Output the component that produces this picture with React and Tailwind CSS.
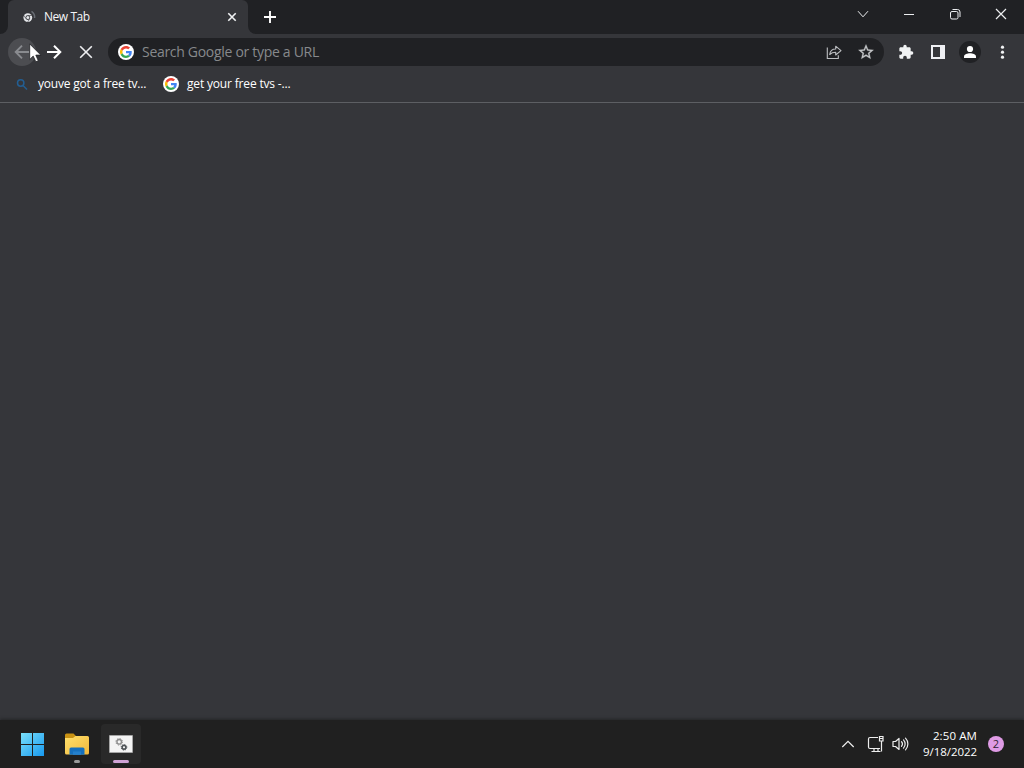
import React from 'react';

const BOOKMARKS = [
  { title: 'youve got a free tv...', icon: 'search', width: 'w-[108px]', tracking: 'tracking-[-0.2px]' },
  { title: 'get your free tvs -...', icon: 'google', width: 'w-[104px]', tracking: 'tracking-[-0.17px]' },
];

function GoogleIcon() {
  return (
    <span className="flex h-4 w-4 shrink-0 items-center justify-center rounded-full bg-white">
      <svg viewBox="0 0 48 48" className="h-3 w-3">
        <path fill="#EA4335" d="M24 9.5c3.5 0 6.700 1.200 9.200 3.600l6.900-6.900C35.900 2.400 30.500 0 24 0 14.600 0 6.500 5.400 2.600 13.200l8 6.200C12.400 13.700 17.700 9.500 24 9.500z" />
        <path fill="#4285F4" d="M47 24.500c0-1.600-.2-3.100-.4-4.500H24v9h12.900c-.6 3-2.300 5.500-4.800 7.200l7.700 6C44.400 38 47 31.800 47 24.500z" />
        <path fill="#FBBC05" d="M10.500 28.600A14.500 14.500 0 0 1 10.600 19.400l-8-6.200A24 24 0 0 0 2.600 34.800z" />
        <path fill="#34A853" d="M24 48c6.500 0 11.900-2.100 15.900-5.800l-7.700-6c-2.200 1.500-4.900 2.300-8.200 2.300-6.300 0-11.600-4.200-13.500-9.900l-7.900 6.200C6.500 42.600 14.600 48 24 48z" />
      </svg>
    </span>
  );
}

function TabFavicon() {
  return (
    <svg viewBox="0 0 16 16" className="h-4 w-4" fill="none">
      <circle cx="7.800" cy="8.600" r="4.400" fill="#e4e6e9" />
      <circle cx="7.800" cy="8.600" r="2.300" fill="#35363a" />
      <circle cx="7.800" cy="8.600" r="1.500" fill="#e4e6e9" />
      <path d="M7.800 6.500h4M5.900 9.700 4 6.500M9.700 9.700 7.700 13" stroke="#35363a" strokeWidth=".6" />
      <path d="M11.500 2.300A7 7 0 0 1 14.600 9" stroke="#696d74" strokeWidth="1.500" />
    </svg>
  );
}

function TabStrip() {
  return (
    <div className="flex h-[34px] shrink-0 bg-[#35363a]">
      <div className="w-2 rounded-br-lg bg-[#202124]" />
      <div className="w-60 bg-[#202124]">
        <div className="flex h-full items-center rounded-t-[6px] bg-[#35363a] pr-2 pl-3">
          <TabFavicon />
          <span className="ml-2 flex-1 text-xs leading-4 tracking-[-0.45px] whitespace-nowrap text-[#f4f5f7]">New Tab</span>
          <svg viewBox="0 0 16 16" className="h-4 w-4" stroke="#f1f3f4" strokeWidth="1.600">
            <path d="m4.300 4.300 7.400 7.400M11.700 4.300l-7.400 7.400" />
          </svg>
        </div>
      </div>
      <div className="flex flex-1 rounded-bl-lg bg-[#202124]">
        <div className="flex w-11 items-center justify-center">
          <svg viewBox="0 0 14 14" className="h-3.5 w-3.5" stroke="#fff" strokeWidth="1.900">
            <path d="M7 1v12M1 7h12" />
          </svg>
        </div>
        <div className="ml-auto flex h-7 items-center">
          <WindowButton><path d="m3 5.200 5 5.600 5-5.600" /></WindowButton>
          <WindowButton><path d="M3 8.500h10" /></WindowButton>
          <WindowButton>
            <rect x="3.500" y="5.500" width="7.500" height="7.500" rx="1.500" />
            <path d="M5.500 3.500h5a2.500 2.500 0 0 1 2.500 2.500v5" />
          </WindowButton>
          <WindowButton><path d="m3 3 10 10M13 3 3 13" strokeWidth="1.200" /></WindowButton>
        </div>
      </div>
    </div>
  );
}

function WindowButton({ children }) {
  return (
    <button className="flex h-7 w-[46px] items-center justify-center">
      <svg viewBox="0 0 16 16" className="h-4 w-4" fill="none" stroke="#eceef0" strokeWidth="1">{children}</svg>
    </button>
  );
}

function ToolButton({ children, className = '' }) {
  return (
    <button className={`flex h-7 w-7 shrink-0 items-center justify-center rounded-full ${className}`}>
      {children}
    </button>
  );
}

function Toolbar() {
  return (
    <div className="flex h-9 shrink-0 items-center gap-1 px-2">
      <ToolButton className="relative bg-[#4c4d51]">
        <svg viewBox="0 0 16 16" className="h-4 w-4" fill="none" stroke="#898b8f" strokeWidth="1.900">
          <path d="M15 8H2M8 1.700 1.700 8 8 14.300" />
        </svg>
        {/* Mouse pointer */}
        <svg viewBox="0 0 13 20" className="absolute top-[5px] left-[21px] h-5 w-[13px]" fill="#fff" stroke="#202124" strokeWidth=".8">
          <path d="M.7.900v15.600l3.500-3.400 2.600 5.700 2.500-1.100-2.500-5.600h5z" />
        </svg>
      </ToolButton>
      <ToolButton>
        <svg viewBox="0 0 16 16" className="h-4 w-4" fill="none" stroke="#fff" strokeWidth="2">
          <path d="M1 8h13M8 1.700 14.300 8 8 14.300" />
        </svg>
      </ToolButton>
      <ToolButton>
        <svg viewBox="0 0 16 16" className="h-4 w-4" stroke="#eff0f2" strokeWidth="1.600">
          <path d="m2.200 2.200 11.600 11.600M13.800 2.200 2.200 13.800" />
        </svg>
      </ToolButton>

      {/* Omnibox */}
      <div className="mx-1 flex h-7 flex-1 items-center rounded-full bg-[#202124] pr-1 pl-2.5">
        <GoogleIcon />
        <span className="ml-2 flex-1 text-[14px] leading-5 tracking-[-0.3px] whitespace-nowrap text-[#87898c]">Search Google or type a URL</span>
        <ToolButton className="mr-1">
          <svg viewBox="0 0 16 16" className="h-4 w-4" fill="none" stroke="#bcbec1" strokeWidth="1.100">
            <path d="M1.300 3.500v11h11v-3.200" />
            <path d="M3.700 10.500c.5-3.700 2.500-5.500 6-5.500V2.200L15 6.600 9.700 11V8.300c-2.500 0-4.400.600-6 2.200z" strokeLinejoin="round" />
          </svg>
        </ToolButton>
        <ToolButton>
          <svg viewBox="0 0 24 24" className="h-[18px] w-[18px]" fill="#c5c7ca" stroke="#c5c7ca" strokeWidth=".4">
            <path d="m22 9.240-7.190-.62L12 2 9.190 8.630 2 9.240l5.460 4.730L5.820 21 12 17.270 18.180 21l-1.630-7.030L22 9.240zM12 15.400l-3.760 2.270 1-4.280-3.320-2.880 4.380-.38L12 6.100l1.710 4.040 4.380.38-3.320 2.880 1 4.280L12 15.400z" />
          </svg>
        </ToolButton>
      </div>

      <ToolButton>
        <svg viewBox="0 0 24 24" className="h-4 w-4" fill="#f1f3f4">
          <path d="M20.500 11H19V7c0-1.100-.9-2-2-2h-4V3.500a2.500 2.500 0 0 0-5 0V5H4c-1.100 0-1.990.9-1.990 2v3.800H3.500c1.490 0 2.700 1.210 2.700 2.700s-1.210 2.700-2.700 2.700H2V20c0 1.100.9 2 2 2h3.800v-1.500c0-1.490 1.210-2.700 2.700-2.700s2.700 1.210 2.700 2.700V22H17c1.100 0 2-.9 2-2v-4h1.500a2.500 2.500 0 0 0 0-5z" />
        </svg>
      </ToolButton>
      <ToolButton>
        <svg viewBox="0 0 16 16" className="h-4 w-4">
          <path fill="#eff0f4" fillRule="evenodd" d="M1 1h14v14H1zM3 3v10h7V3z" />
        </svg>
      </ToolButton>
      <ToolButton>
        <span className="flex h-[22px] w-[22px] items-center justify-center rounded-full bg-[#202124]">
          <svg viewBox="0 0 16 16" className="h-4 w-4" fill="#fff">
            <circle cx="8" cy="5" r="3.100" />
            <path d="M2 14v-1.500C2 10.200 5.500 9.200 8 9.200s6 1 6 3.300V14z" />
          </svg>
        </span>
      </ToolButton>
      <ToolButton>
        <svg viewBox="0 0 16 16" className="h-4 w-4" fill="#f1f3f4">
          <circle cx="8.500" cy="3.200" r="1.600" />
          <circle cx="8.500" cy="8.200" r="1.600" />
          <circle cx="8.500" cy="13.200" r="1.600" />
        </svg>
      </ToolButton>
    </div>
  );
}

function BookmarksBar() {
  return (
    <div className="flex h-[33px] shrink-0 items-start gap-[17px] border-b border-[#5d5f63] px-3.5 pt-1.5">
      {BOOKMARKS.map((b) => (
        <div key={b.title} className="flex items-center gap-2">
          {b.icon === 'google' ? <GoogleIcon /> : (
            <svg viewBox="0 0 16 16" className="h-4 w-4" fill="none" stroke="#235e92" strokeWidth="1.500">
              <circle cx="6.700" cy="7" r="3.200" />
              <path d="m9 9.500 4 4" />
            </svg>
          )}
          <span className={`${b.width} ${b.tracking} text-xs leading-4 whitespace-nowrap text-white`}>{b.title}</span>
        </div>
      ))}
    </div>
  );
}

function StartIcon() {
  return (
    <svg viewBox="0 0 24 24" className="h-6 w-6">
      <defs>
        <linearGradient id="win" x1="0" y1="0" x2="24" y2="24" gradientUnits="userSpaceOnUse">
          <stop stopColor="#7ce2fb" />
          <stop offset="1" stopColor="#1597ef" />
        </linearGradient>
      </defs>
      <path fill="url(#win)" d="M0 1h11v11H0zM12 1h11v11H12zM0 13h11v11H0zM12 13h11v11H12z" />
    </svg>
  );
}

function FolderIcon() {
  return (
    <svg viewBox="0 0 26 24" className="h-6 w-[26px]">
      <defs>
        <linearGradient id="folder" x1="0" y1="0" x2="1" y2="1">
          <stop stopColor="#ffe06c" />
          <stop offset="1" stopColor="#f2b83b" />
        </linearGradient>
      </defs>
      <path fill="#c99213" d="M1 3a1.500 1.500 0 0 1 1.500-1.500h7L12 4v4H1z" />
      <path fill="url(#folder)" d="M1 6h8l2.500-2H23.500A1.500 1.500 0 0 1 25 5.500V21a1.500 1.500 0 0 1-1.500 1.500h-21A1.500 1.500 0 0 1 1 21z" />
      <path fill="#1670bd" d="M5.500 22.800V17a1.500 1.500 0 0 1 1.500-1.500h12a1.500 1.500 0 0 1 1.500 1.500v5.800z" />
      <path fill="#2480cc" d="M9 19.500h8v3.300H9z" />
    </svg>
  );
}

function ScriptWindowIcon() {
  return (
    <svg viewBox="0 0 24 18" className="h-[18px] w-6" fill="none">
      <path fill="#f4f4f4" stroke="#b5b5b5" strokeWidth=".6" d="M.5.500h23v17H.5z" />
      <circle cx="10.200" cy="6.800" r="2.300" stroke="#8d8d8d" strokeWidth="1.400" />
      <circle cx="10.200" cy="6.800" r="3.300" stroke="#8d8d8d" strokeWidth="1" strokeDasharray="1.300 1.290" />
      <circle cx="15" cy="12.300" r="1.900" stroke="#4b5054" strokeWidth="1.500" />
      <circle cx="15" cy="12.300" r="2.800" stroke="#4b5054" strokeWidth="1" strokeDasharray="1.200 1" />
    </svg>
  );
}

function Taskbar() {
  return (
    <div className="flex h-12 shrink-0 items-center bg-[#202020] shadow-[0_-1px_3px_#242527]">
      <div className="flex h-full items-center gap-1 pl-[13px]">
        <div className="flex h-10 w-10 items-center justify-center"><StartIcon /></div>
        <div className="relative flex h-10 w-10 items-center justify-center">
          <FolderIcon />
          <span className="absolute bottom-px h-[3px] w-1.5 rounded-full bg-[#9a9a9a]" />
        </div>
        <div className="relative flex h-10 w-10 items-center justify-center rounded bg-[#292929]">
          <ScriptWindowIcon />
          <span className="absolute bottom-px h-[3px] w-4 rounded-full bg-[#d0a3d6]" />
        </div>
      </div>

      {/* System tray */}
      <div className="ml-auto flex items-center pr-3 text-white">
        <svg viewBox="0 0 16 16" className="h-4 w-4" fill="none" stroke="#f0f0f0" strokeWidth="1.200">
          <path d="m2.300 11 5.700-5.700 5.700 5.700" />
        </svg>
        <svg viewBox="0 0 18 18" className="ml-[11px] h-[18px] w-[18px]" fill="none" stroke="#eee" strokeWidth="1.200">
          <path d="M11 2.500H3A1.500 1.500 0 0 0 1.500 4v8A1.500 1.500 0 0 0 3 13.500h10M4.500 16.500h9M7 13.500v3M11 13.500v3" />
          <path d="M12.500 1.500h3.500v4.500h-3.500zM14.500 6v10.500M12.500 3.500h3.500" />
        </svg>
        <svg viewBox="0 0 18 18" className="ml-[7px] h-[18px] w-[18px]" fill="none" stroke="#eee" strokeWidth="1.200" strokeLinejoin="round">
          <path d="M1 6.500h2.500L7 3.500v11l-3.500-3H1z" />
          <path d="M9.500 6.700a3.500 3.500 0 0 1 0 4.600M11.500 4.900a6 6 0 0 1 0 8.200M13.500 3.200a8.300 8.300 0 0 1 0 11.600" strokeLinecap="round" />
        </svg>
        <div className="ml-[11px] flex w-14 flex-col items-end text-right text-[11.5px] leading-4 whitespace-nowrap">
          <span className="tracking-[0.1px]">2:50 AM</span>
          <span className="tracking-[-0.05px]">9/18/2022</span>
        </div>
        <span className="mr-2 ml-[11px] flex h-4 w-4 items-center justify-center rounded-full bg-[#df9be5] text-[11px] leading-4 text-[#302333]">2</span>
      </div>
    </div>
  );
}

export default function App() {
  return (
    <div className="flex h-screen w-full flex-col overflow-hidden bg-[#35363a] font-['Open_Sans','Noto_Sans',sans-serif]">
      <TabStrip />
      <Toolbar />
      <BookmarksBar />
      <main className="flex-1 bg-[#35363a]" />
      <Taskbar />
    </div>
  );
}
